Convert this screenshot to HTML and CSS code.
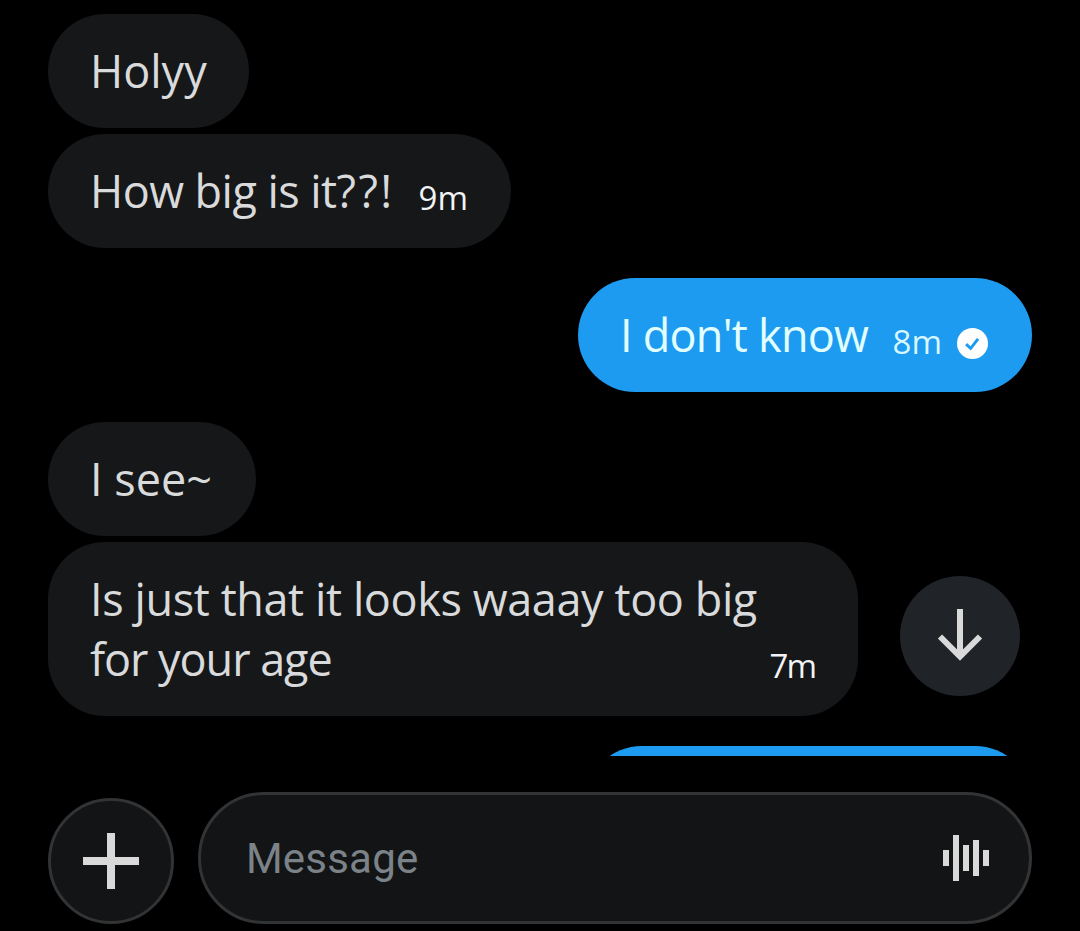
FILE: index.html
```
<!DOCTYPE html>
<html lang="en">
<head>
    <meta charset="UTF-8">
    <meta name="viewport" content="width=device-width, initial-scale=1.0">
    <title>Messages</title>
    <link rel="stylesheet" href="styles.css">
</head>
<body>
    <div class="chat">
        <div class="messages">
            <div class="bubble received holyy"><span class="text">Holyy</span></div>
            <div class="bubble received how-big">
                <span class="text">How big is it<span class="marks">??!</span></span>
                <span class="time">9m</span>
            </div>
            <div class="bubble sent new-group dont-know">
                <span class="text">I don't know</span>
                <span class="time">8m</span>
                <svg class="check" viewBox="0 0 30 30">
                    <circle cx="15" cy="15" r="15" fill="#fff"/>
                    <path d="M8.8 15.600l4.400 4.200 7.200-9.200" fill="none" stroke="#1d9bf0" stroke-width="2.8"/>
                </svg>
            </div>
            <div class="bubble received new-group i-see"><span class="text">I see~</span></div>
            <div class="bubble received too-big">
                <span class="text"><span class="line-one">Is just that it looks waaay too big</span><br><span class="line-two">for your age</span></span>
                <span class="time">7m</span>
            </div>
            <div class="bubble sent new-group next-message"></div>

            <button class="scroll-down" aria-label="Scroll down">
                <svg width="46" height="54" viewBox="0 0 46 54">
                    <path d="M23 0v46M3 27.500L23 47.500 43 27.500" fill="none" stroke="#d9d9d9" stroke-width="6"/>
                </svg>
            </button>
        </div>

        <div class="composer">
            <button class="btn-add" aria-label="Add">
                <svg width="56" height="56" viewBox="0 0 56 56">
                    <path d="M28 0v56M0 28h56" stroke="#d9d9d9" stroke-width="8"/>
                </svg>
            </button>
            <div class="input-box">
                <span class="placeholder">Message</span>
                <svg width="46" height="46" viewBox="0 0 46 46" fill="#d9d9d9">
                    <rect x="0" y="15" width="6" height="16"/>
                    <rect x="10" y="0" width="6" height="46"/>
                    <rect x="20" y="10" width="6" height="26"/>
                    <rect x="30" y="5" width="6" height="36"/>
                    <rect x="40" y="15" width="6" height="16"/>
                </svg>
            </div>
        </div>
    </div>
</body>
</html>
```
FILE: styles.css
```
* {
    box-sizing: border-box;
}
body {
    margin: 0;
    background: #000;
    font-family: "Open Sans", "Noto Sans", sans-serif;
    overflow: hidden;
}
button {
    padding: 0;
    border: none;
}
svg {
    display: block;
    flex-shrink: 0;
}
.chat {
    height: 931px;
    display: flex;
    flex-direction: column;
}
.messages {
    position: relative;
    height: 756px;
    padding: 14px 48px 0;
    display: flex;
    flex-direction: column;
    gap: 6px;
    overflow: hidden;
}
.bubble {
    display: flex;
    align-items: flex-end;
    flex-shrink: 0;
    min-height: 114px;
    padding: 27px 43px 27px 42px;
    border-radius: 57px;
    font-size: 45px;
    line-height: 60px;
    white-space: nowrap;
}
.received {
    align-self: flex-start;
    background: #161719;
    color: #d9dadb;
}
.sent {
    align-self: flex-end;
    background: #1d9bf0;
    color: #e1ffff;
}
.new-group {
    margin-top: 24px;
}
.time {
    margin-left: auto;
    font-size: 33px;
    line-height: 46px;
    color: #f2f3f4;
}
.sent .time {
    color: #d8f7ff;
}
.check {
    width: 31px;
    height: 31px;
    margin: 0 1px 6px 15px;
}
.holyy {
    width: 201px;
}
.how-big {
    width: 463px;
}
.how-big .text {
    letter-spacing: -0.55px;
}
.how-big .marks {
    letter-spacing: 2.4px;
}
.dont-know {
    width: 454px;
}
.dont-know .text {
    letter-spacing: -0.75px;
}
.i-see {
    width: 208px;
}
.too-big {
    width: 810px;
}
.too-big .text {
    width: 670px;
}
.too-big .line-one {
    letter-spacing: -0.4px;
}
.too-big .line-two {
    letter-spacing: -1.05px;
}
.too-big .time {
    letter-spacing: -2px;
}
.next-message {
    width: 447px;
}
.scroll-down {
    position: absolute;
    top: 576px;
    right: 60px;
    width: 120px;
    height: 120px;
    display: flex;
    align-items: center;
    justify-content: center;
    border-radius: 50%;
    background: #202327;
}
.composer {
    display: flex;
    align-items: flex-end;
    gap: 24px;
    margin-top: 36px;
    padding: 0 48px;
}
.btn-add {
    width: 126px;
    height: 126px;
    display: flex;
    align-items: center;
    justify-content: center;
    border: 3px solid #323335;
    border-radius: 50%;
    background: #121415;
}
.input-box {
    flex: 1;
    height: 132px;
    display: flex;
    align-items: center;
    justify-content: space-between;
    padding: 0 40px 0 45px;
    border: 3px solid #323335;
    border-radius: 66px;
    background: #121415;
}
.placeholder {
    font-family: Roboto, sans-serif;
    font-size: 42px;
    letter-spacing: 0.2px;
    color: #7b8288;
}
```
